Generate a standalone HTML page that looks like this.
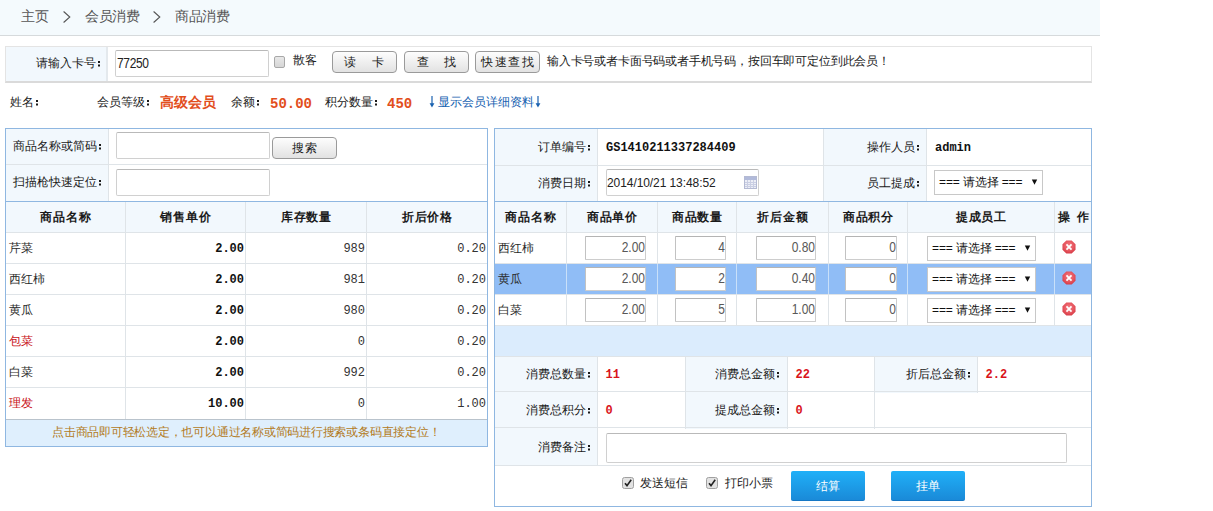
<!DOCTYPE html>
<html><head><meta charset="utf-8"><style>
*{box-sizing:border-box;margin:0;padding:0}
html,body{width:1213px;height:511px;overflow:hidden;background:#fff}
body{font-family:"Liberation Sans",sans-serif;font-size:12px;color:#1a1a1a;position:relative}
.mono{font-family:"Liberation Mono",monospace}
.a{position:absolute}
.txt{position:absolute;white-space:nowrap;line-height:14px}
b.cl{display:inline-block;width:12px;height:6px;position:relative;vertical-align:baseline}
b.cl::before{content:"";position:absolute;left:2px;top:0;width:2px;height:2px;background:currentColor;box-shadow:0 3.5px 0 currentColor}
#crumb{left:0;top:0;width:1100px;height:36px;background:#f4fafd;border-bottom:1px solid #d6dadc;font-size:14px;color:#555;line-height:33px}
#crumb span{position:absolute;top:0;letter-spacing:-0.45px}
#crumb svg{position:absolute;top:11px}
#card{left:5px;top:46px;width:1087px;height:37px;border:1px solid #e4e4e4;border-bottom:2px solid #dadada;background:#fff}
#card .lab{position:absolute;left:0;top:0;width:102px;height:34px;background:#f2f8fd;border-right:2px solid #e4e9ed}
.inp{position:absolute;background:#fff;border:1px solid #d0d0d0;border-top-color:#b9b9b9;border-radius:2px}
.gbtn{position:absolute;height:22px;width:65px;border:1px solid #9a9a9a;border-radius:4px;background:linear-gradient(#fdfdfd,#e2e2e2);color:#1a1a1a}
.gbtn span{position:absolute;top:3px;line-height:14px;white-space:nowrap}
.chk{position:absolute;width:11px;height:12px;border:1px solid #a8a8a8;border-radius:2px;background:linear-gradient(#e8e8e8,#d6d6d6)}
.panel{position:absolute;border:1px solid #8fb7e1;background:#fff;overflow:hidden}
.hl{position:absolute;background:#dfe4e8}
.bg{position:absolute}
.th{position:absolute;height:30px;line-height:30px;text-align:center;white-space:nowrap;letter-spacing:0.7px;text-indent:0.7px;font-weight:bold;color:#1a1a1a}
.td{position:absolute;height:30px;line-height:30px;white-space:nowrap;color:#2a2a2a}
.tdn{position:absolute;height:30px;line-height:32px;text-align:right;font-family:"Liberation Mono",monospace;color:#333}
.b{font-weight:bold;color:#111}
.inp2{position:absolute;height:24px;background:#fff;border:1px solid #cdcdcd;border-top-color:#b4b4b4;border-left-color:#c2c2c2;border-radius:1px;text-align:right;padding-right:0;line-height:24px;font-size:12px;color:#585858;overflow:hidden}
.inp2 span{display:inline-block;transform:scaleY(1.16);transform-origin:50% 100%}
.sel{position:absolute;height:25px;background:#fff;border:1px solid #c8c8c8;font-size:12px;color:#111;line-height:22px}
.sel span{position:absolute;left:4px;top:0;letter-spacing:-0.12px}
.sel svg{position:absolute;left:96px;top:8px}
.del{position:absolute;width:14px;height:14px}
.red{color:#d9141b}
.chk2{position:absolute;width:11px;height:12px;border:1px solid #a8a8a8;border-radius:2px;background:linear-gradient(#eee,#d6d6d6)}
.bbtn{position:absolute;width:74px;height:30px;border-radius:2px;background:linear-gradient(#20b0f8,#1a8ad8);border-bottom:1px solid #1677c4;color:#fff;text-align:center;line-height:30px;font-size:12px}
</style></head><body>
<div id="crumb" class="a">
<span style="left:21px">主页</span>
<svg width="8" height="12" viewBox="0 0 8 12" style="left:63px"><polyline points="0.6,0.5 6.8,6 0.6,11.5" fill="none" stroke="#555" stroke-width="1.1"/></svg>
<span style="left:85px">会员消费</span>
<svg width="8" height="12" viewBox="0 0 8 12" style="left:153px"><polyline points="0.6,0.5 6.8,6 0.6,11.5" fill="none" stroke="#555" stroke-width="1.1"/></svg>
<span style="left:175px">商品消费</span>
</div>
<div id="card" class="a"><div class="lab"></div></div>
<div class="txt" style="left:36px;top:56px">请输入卡号<b class="cl"></b></div>
<div class="inp" style="left:115px;top:50px;width:154px;height:27px"></div>
<div class="txt" style="left:117px;top:57px;font-size:12px;color:#222;transform:scaleY(1.15);transform-origin:0 100%;letter-spacing:-0.35px">77250</div>
<div class="chk" style="left:274px;top:56px"></div>
<div class="txt" style="left:293px;top:53px">散客</div>
<div class="gbtn" style="left:332px;top:51px"><span style="left:11px">读</span><span style="left:39px">卡</span></div>
<div class="gbtn" style="left:404px;top:51px"><span style="left:12px">查</span><span style="left:38.5px">找</span></div>
<div class="gbtn" style="left:475px;top:51px"><span style="left:5px;letter-spacing:1.6px">快速查找</span></div>
<div class="txt" style="left:547px;top:54px;letter-spacing:-0.18px">输入卡号或者卡面号码或者手机号码，按回车即可定位到此会员！</div>
<div class="txt" style="left:10px;top:95px">姓名<b class="cl"></b></div>
<div class="txt" style="left:97px;top:95px">会员等级<b class="cl"></b></div>
<div class="txt" style="left:160px;top:95px;font-size:14px;font-weight:bold;color:#e24e1c">高级会员</div>
<div class="txt" style="left:231px;top:95px">余额<b class="cl"></b></div>
<div class="txt mono" style="left:270px;top:97px;font-size:14px;font-weight:bold;color:#e24e1c">50.00</div>
<div class="txt" style="left:325px;top:95px">积分数量<b class="cl"></b></div>
<div class="txt mono" style="left:387px;top:97px;font-size:14px;font-weight:bold;color:#e24e1c">450</div>
<div class="txt" style="left:437.5px;top:95px;color:#1460b0">显示会员详细资料</div>
<svg class="a" style="left:429px;top:96px" width="6" height="12" viewBox="0 0 6 12"><path d="M3 0V10" stroke="#1a62b0" stroke-width="1.2"/><path d="M0.6 7.2L3 11.5L5.4 7.2Z" fill="#1a62b0"/></svg>
<svg class="a" style="left:535px;top:96px" width="6" height="12" viewBox="0 0 6 12"><path d="M3 0V10" stroke="#1a62b0" stroke-width="1.2"/><path d="M0.6 7.2L3 11.5L5.4 7.2Z" fill="#1a62b0"/></svg>
<div class="panel" style="left:5px;top:128px;width:483px;height:319px">
  <div class="bg" style="left:0;top:0;width:102px;height:72px;background:#f2f8fd"></div>
  <div class="bg" style="left:0;top:72px;width:481px;height:31px;background:#f2f8fd"></div>
  <div class="bg" style="left:0;top:290px;width:481px;height:27px;background:#dfeffd"></div>
  <div class="hl" style="left:0;top:35px;width:481px;height:1px"></div>
  <div class="hl" style="left:0;top:72px;width:481px;height:1px;background:#8fb7e1"></div>
  <div class="hl" style="left:0;top:103px;width:481px;height:1px"></div>
  <div class="hl" style="left:0;top:134px;width:481px;height:1px"></div>
  <div class="hl" style="left:0;top:165px;width:481px;height:1px"></div>
  <div class="hl" style="left:0;top:196px;width:481px;height:1px"></div>
  <div class="hl" style="left:0;top:227px;width:481px;height:1px"></div>
  <div class="hl" style="left:0;top:258px;width:481px;height:1px"></div>
  <div class="hl" style="left:0;top:290px;width:481px;height:1px;background:#b9c3cc"></div>
  <div class="hl" style="left:102px;top:0;width:1px;height:72px"></div>
  <div class="hl" style="left:119px;top:73px;width:1px;height:217px"></div>
  <div class="hl" style="left:239px;top:73px;width:1px;height:217px"></div>
  <div class="hl" style="left:360px;top:73px;width:1px;height:217px"></div>
</div>
<div class="txt" style="left:13px;top:139px">商品名称或简码<b class="cl"></b></div>
<div class="inp" style="left:116px;top:132px;width:154px;height:27px"></div>
<div class="gbtn" style="left:272px;top:137px;height:22px;width:65px"><span style="left:19px;letter-spacing:1px">搜索</span></div>
<div class="txt" style="left:13px;top:175px">扫描枪快速定位<b class="cl"></b></div>
<div class="inp" style="left:116px;top:169px;width:154px;height:27px"></div>
<div class="th" style="left:6px;top:202px;width:119px">商品名称</div>
<div class="th" style="left:126px;top:202px;width:119px">销售单价</div>
<div class="th" style="left:246px;top:202px;width:120px">库存数量</div>
<div class="th" style="left:367px;top:202px;width:120px">折后价格</div>
<div class="td" style="left:9px;top:233px">芹菜</div>
<div class="tdn b" style="left:126px;top:233px;width:118px"><span>2.00</span></div>
<div class="tdn" style="left:246px;top:233px;width:119px"><span>989</span></div>
<div class="tdn" style="left:367px;top:233px;width:119px">0.20</div>
<div class="td" style="left:9px;top:264px">西红柿</div>
<div class="tdn b" style="left:126px;top:264px;width:118px"><span>2.00</span></div>
<div class="tdn" style="left:246px;top:264px;width:119px"><span>981</span></div>
<div class="tdn" style="left:367px;top:264px;width:119px">0.20</div>
<div class="td" style="left:9px;top:295px">黄瓜</div>
<div class="tdn b" style="left:126px;top:295px;width:118px"><span>2.00</span></div>
<div class="tdn" style="left:246px;top:295px;width:119px"><span>980</span></div>
<div class="tdn" style="left:367px;top:295px;width:119px">0.20</div>
<div class="td" style="left:9px;top:326px;color:#c81018">包菜</div>
<div class="tdn b" style="left:126px;top:326px;width:118px"><span>2.00</span></div>
<div class="tdn" style="left:246px;top:326px;width:119px"><span>0</span></div>
<div class="tdn" style="left:367px;top:326px;width:119px">0.20</div>
<div class="td" style="left:9px;top:357px">白菜</div>
<div class="tdn b" style="left:126px;top:357px;width:118px"><span>2.00</span></div>
<div class="tdn" style="left:246px;top:357px;width:119px"><span>992</span></div>
<div class="tdn" style="left:367px;top:357px;width:119px">0.20</div>
<div class="td" style="left:9px;top:388px;color:#c81018">理发</div>
<div class="tdn b" style="left:126px;top:388px;width:118px"><span>10.00</span></div>
<div class="tdn" style="left:246px;top:388px;width:119px"><span>0</span></div>
<div class="tdn" style="left:367px;top:388px;width:119px">1.00</div>
<div class="txt" style="left:52px;top:425px;color:#b27a22;letter-spacing:-0.23px">点击商品即可轻松选定，也可以通过名称或简码进行搜索或条码直接定位！</div>
<div class="panel" style="left:494px;top:128px;width:598px;height:379px">
  <div class="bg" style="left:0;top:0;width:102px;height:72px;background:#f2f8fd"></div>
  <div class="bg" style="left:329px;top:0;width:102px;height:72px;background:#f2f8fd"></div>
  <div class="bg" style="left:0;top:73px;width:596px;height:30px;background:#f2f8fd"></div>
  <div class="bg" style="left:0;top:135px;width:596px;height:30px;background:#90bdf6"></div>
  <div class="bg" style="left:0;top:197px;width:596px;height:31px;background:#dbecfd"></div>
  <div class="bg" style="left:0;top:228px;width:102px;height:108px;background:#f2f8fd"></div>
  <div class="bg" style="left:191px;top:228px;width:102px;height:72px;background:#f2f8fd"></div>
  <div class="bg" style="left:380px;top:228px;width:103px;height:36px;background:#f2f8fd"></div>
  <div class="hl" style="left:0;top:36px;width:596px;height:1px"></div>
  <div class="hl" style="left:0;top:72px;width:596px;height:1px;background:#8fb7e1"></div>
  <div class="hl" style="left:0;top:103px;width:596px;height:1px"></div>
  <div class="hl" style="left:0;top:134px;width:596px;height:1px"></div>
  <div class="hl" style="left:0;top:165px;width:596px;height:1px"></div>
  <div class="hl" style="left:0;top:196px;width:596px;height:1px"></div>
  <div class="hl" style="left:0;top:227px;width:596px;height:1px"></div>
  <div class="hl" style="left:0;top:262px;width:596px;height:1px"></div>
  <div class="hl" style="left:0;top:298px;width:596px;height:1px"></div>
  <div class="hl" style="left:0;top:336px;width:596px;height:1px"></div>
  <div class="hl" style="left:102px;top:0;width:1px;height:72px"></div>
  <div class="hl" style="left:328px;top:0;width:1px;height:72px"></div>
  <div class="hl" style="left:431px;top:0;width:1px;height:72px"></div>
  <div class="hl" style="left:71px;top:73px;width:1px;height:124px"></div>
  <div class="hl" style="left:162px;top:73px;width:1px;height:124px"></div>
  <div class="hl" style="left:241px;top:73px;width:1px;height:124px"></div>
  <div class="hl" style="left:333px;top:73px;width:1px;height:124px"></div>
  <div class="hl" style="left:412px;top:73px;width:1px;height:124px"></div>
  <div class="hl" style="left:559px;top:73px;width:1px;height:124px"></div>
  <div class="hl" style="left:102px;top:228px;width:1px;height:108px"></div>
  <div class="hl" style="left:71px;top:135px;width:1px;height:30px;background:#c9e0f9"></div>
  <div class="hl" style="left:162px;top:135px;width:1px;height:30px;background:#c9e0f9"></div>
  <div class="hl" style="left:241px;top:135px;width:1px;height:30px;background:#c9e0f9"></div>
  <div class="hl" style="left:333px;top:135px;width:1px;height:30px;background:#c9e0f9"></div>
  <div class="hl" style="left:412px;top:135px;width:1px;height:30px;background:#c9e0f9"></div>
  <div class="hl" style="left:559px;top:135px;width:1px;height:30px;background:#c9e0f9"></div>
  <div class="hl" style="left:190px;top:228px;width:1px;height:72px"></div>
  <div class="hl" style="left:292px;top:228px;width:1px;height:72px"></div>
  <div class="hl" style="left:379px;top:228px;width:1px;height:72px"></div>
  <div class="hl" style="left:482px;top:228px;width:1px;height:36px"></div>
</div>
<div class="txt" style="left:538px;top:140px">订单编号<b class="cl"></b></div>
<div class="txt mono b" style="left:606px;top:141px">GS1410211337284409</div>
<div class="txt" style="left:867px;top:140px">操作人员<b class="cl"></b></div>
<div class="txt mono b" style="left:935px;top:141px">admin</div>
<div class="txt" style="left:538px;top:176px">消费日期<b class="cl"></b></div>
<div class="inp" style="left:606px;top:169px;width:153px;height:27px"></div>
<div class="txt" style="left:607px;top:176px;color:#222;transform:scaleY(1.12);transform-origin:0 100%;letter-spacing:-0.08px">2014/10/21 13:48:52</div>
<svg class="a" style="left:744px;top:176px" width="13" height="13" viewBox="0 0 13 13"><rect x="0.5" y="0.5" width="12" height="12" fill="#eceef6" stroke="#b4bad3"/><rect x="1" y="1" width="11" height="3" fill="#b1bada"/><path d="M1 6.5H12M1 8.5H12M1 10.5H12M3.5 4V12M6.5 4V12M9.5 4V12" stroke="#c9cee3" stroke-width="1"/></svg>
<div class="txt" style="left:867px;top:176px">员工提成<b class="cl"></b></div>
<div class="sel" style="left:934px;top:170px;width:109px"><span>=== 请选择 ===</span><svg width="7" height="6" viewBox="0 0 7 6"><path d="M0.8 0.5H6.2L3.5 5.8Z" fill="#111"/></svg></div>
<div class="th" style="left:495px;top:202px;width:71px">商品名称</div>
<div class="th" style="left:567px;top:202px;width:90px">商品单价</div>
<div class="th" style="left:658px;top:202px;width:78px">商品数量</div>
<div class="th" style="left:737px;top:202px;width:91px">折后金额</div>
<div class="th" style="left:829px;top:202px;width:78px">商品积分</div>
<div class="th" style="left:908px;top:202px;width:146px">提成员工</div>
<div class="th" style="left:1055px;top:202px;width:35px"><span style="position:absolute;left:2px">操</span><span style="position:absolute;left:21px">作</span></div>
<div class="td" style="left:498px;top:233px">西红柿</div>
<div class="inp2" style="left:585px;top:236px;width:61px"><span>2.00</span></div>
<div class="inp2" style="left:675px;top:236px;width:51px"><span>4</span></div>
<div class="inp2" style="left:756px;top:236px;width:60px"><span>0.80</span></div>
<div class="inp2" style="left:845px;top:236px;width:52px"><span>0</span></div>
<div class="sel" style="left:927px;top:236px;width:109px"><span>=== 请选择 ===</span><svg width="7" height="6" viewBox="0 0 7 6"><path d="M0.8 0.5H6.2L3.5 5.8Z" fill="#111"/></svg></div>
<svg class="del" style="left:1062px;top:240px" width="15" height="15" viewBox="0 0 15 15"><defs><radialGradient id="rg0" cx="50%" cy="40%" r="60%"><stop offset="0" stop-color="#f47d84"/><stop offset="0.7" stop-color="#e5525b"/><stop offset="1" stop-color="#d63c47"/></radialGradient></defs><path d="M4.6 0.5H10.4L14.5 4.6V10.4L10.4 14.5H4.6L0.5 10.4V4.6Z" fill="url(#rg0)"/><path d="M4.8 4.8L10.2 10.2M10.2 4.8L4.8 10.2" stroke="#fff" stroke-width="1.9"/></svg>
<div class="td" style="left:498px;top:264px">黄瓜</div>
<div class="inp2" style="left:585px;top:267px;width:61px"><span>2.00</span></div>
<div class="inp2" style="left:675px;top:267px;width:51px"><span>2</span></div>
<div class="inp2" style="left:756px;top:267px;width:60px"><span>0.40</span></div>
<div class="inp2" style="left:845px;top:267px;width:52px"><span>0</span></div>
<div class="sel" style="left:927px;top:267px;width:109px"><span>=== 请选择 ===</span><svg width="7" height="6" viewBox="0 0 7 6"><path d="M0.8 0.5H6.2L3.5 5.8Z" fill="#111"/></svg></div>
<svg class="del" style="left:1062px;top:271px" width="15" height="15" viewBox="0 0 15 15"><defs><radialGradient id="rg1" cx="50%" cy="40%" r="60%"><stop offset="0" stop-color="#f47d84"/><stop offset="0.7" stop-color="#e5525b"/><stop offset="1" stop-color="#d63c47"/></radialGradient></defs><path d="M4.6 0.5H10.4L14.5 4.6V10.4L10.4 14.5H4.6L0.5 10.4V4.6Z" fill="url(#rg1)"/><path d="M4.8 4.8L10.2 10.2M10.2 4.8L4.8 10.2" stroke="#fff" stroke-width="1.9"/></svg>
<div class="td" style="left:498px;top:295px">白菜</div>
<div class="inp2" style="left:585px;top:298px;width:61px"><span>2.00</span></div>
<div class="inp2" style="left:675px;top:298px;width:51px"><span>5</span></div>
<div class="inp2" style="left:756px;top:298px;width:60px"><span>1.00</span></div>
<div class="inp2" style="left:845px;top:298px;width:52px"><span>0</span></div>
<div class="sel" style="left:927px;top:298px;width:109px"><span>=== 请选择 ===</span><svg width="7" height="6" viewBox="0 0 7 6"><path d="M0.8 0.5H6.2L3.5 5.8Z" fill="#111"/></svg></div>
<svg class="del" style="left:1062px;top:302px" width="15" height="15" viewBox="0 0 15 15"><defs><radialGradient id="rg2" cx="50%" cy="40%" r="60%"><stop offset="0" stop-color="#f47d84"/><stop offset="0.7" stop-color="#e5525b"/><stop offset="1" stop-color="#d63c47"/></radialGradient></defs><path d="M4.6 0.5H10.4L14.5 4.6V10.4L10.4 14.5H4.6L0.5 10.4V4.6Z" fill="url(#rg2)"/><path d="M4.8 4.8L10.2 10.2M10.2 4.8L4.8 10.2" stroke="#fff" stroke-width="1.9"/></svg>
<div class="txt" style="left:526px;top:367px">消费总数量<b class="cl"></b></div>
<div class="txt mono b red" style="left:605.5px;top:368px">11</div>
<div class="txt" style="left:715px;top:367px">消费总金额<b class="cl"></b></div>
<div class="txt mono b red" style="left:795.5px;top:368px">22</div>
<div class="txt" style="left:905.5px;top:367px">折后总金额<b class="cl"></b></div>
<div class="txt mono b red" style="left:985.5px;top:368px">2.2</div>
<div class="txt" style="left:526px;top:403px">消费总积分<b class="cl"></b></div>
<div class="txt mono b red" style="left:605.5px;top:404px">0</div>
<div class="txt" style="left:715px;top:403px">提成总金额<b class="cl"></b></div>
<div class="txt mono b red" style="left:795.5px;top:404px">0</div>
<div class="txt" style="left:538px;top:440px">消费备注<b class="cl"></b></div>
<div class="inp" style="left:606px;top:433px;width:461px;height:30px"></div>
<svg class="a" style="left:622px;top:477px" width="12" height="12" viewBox="0 0 12 12"><rect x="0.5" y="0.5" width="11" height="11" rx="2" fill="#e2e2e2" stroke="#a0a0a0"/><path d="M3 6.2L5 8.6L9.2 2.8" fill="none" stroke="#222" stroke-width="1.6"/></svg>
<div class="txt" style="left:640px;top:476px">发送短信</div>
<svg class="a" style="left:706px;top:477px" width="12" height="12" viewBox="0 0 12 12"><rect x="0.5" y="0.5" width="11" height="11" rx="2" fill="#e2e2e2" stroke="#a0a0a0"/><path d="M3 6.2L5 8.6L9.2 2.8" fill="none" stroke="#222" stroke-width="1.6"/></svg>
<div class="txt" style="left:725px;top:476px">打印小票</div>
<div class="bbtn" style="left:791px;top:471px">结算</div>
<div class="bbtn" style="left:891px;top:471px">挂单</div>
</body></html>
